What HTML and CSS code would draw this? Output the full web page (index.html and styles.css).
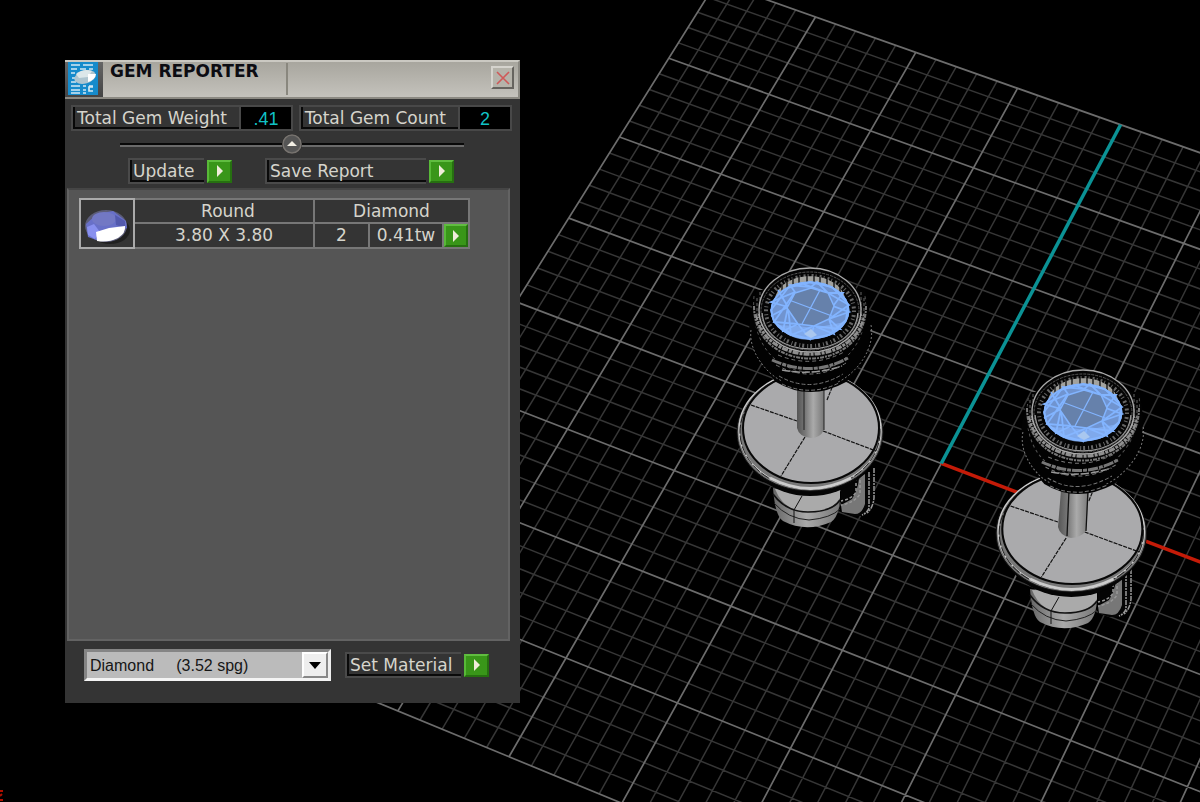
FILE: index.html
```html
<!DOCTYPE html>
<html lang="en">
<head>
<meta charset="utf-8">
<meta name="viewport" content="width=device-width, initial-scale=1">
<title>Gem Reporter</title>
<link rel="stylesheet" href="styles.css">
</head>
<body>
<main class="desktop">
  <svg class="scene" viewBox="0 0 1200 802" preserveAspectRatio="xMinYMin slice" aria-label="Perspective viewport">
    <defs>
      <linearGradient id="post-fill"><stop offset="0" stop-color="#555"/><stop offset=".3" stop-color="#777"/><stop offset=".6" stop-color="#aaa"/><stop offset="1" stop-color="#777"/></linearGradient>
      <linearGradient id="nut-fill"><stop offset="0" stop-color="#666"/><stop offset=".5" stop-color="#aaa"/><stop offset="1" stop-color="#777"/></linearGradient>

      <g id="nut">
        <path d="M841 474H875V500Q873 513 864 516H852L841 512Z" fill="#050505"/>
        <path d="M841 505L852 499Q858 490 859 478L865 474V504Q862 514 855 514L842 512Z" fill="#777"/>
        <path d="M856 478V492Q852 499 841 501M860 480V494Q854 503 841 505" fill="none" stroke="#999" stroke-width="1.5" stroke-dasharray="3 2"/>
        <path d="M869 472V508Q867 513 862 515M874 468V498Q873 508 867 513" fill="none" stroke="#999" stroke-width="1.5" stroke-dasharray="5 1 2 1"/>
        <path d="M773 488Q775 516 783 521Q806 533 831 522Q840 516 840 495Z" fill="url(#nut-fill)"/>
        <path d="M775 489Q784 512 808 512Q832 512 840 498V490Z" fill="#aaa"/>
        <path d="M773 494Q786 512 808 512Q832 512 840 500" fill="none" stroke="#111" stroke-width="1.6"/>
        <path d="M774 503Q788 519 809 520Q831 518 840 509" fill="none" stroke="#222"/>
        <path d="M802 496L794 510V523" fill="none" stroke="#111"/>
      </g>

      <g id="plate">
        <ellipse cx="810" cy="436" rx="70" ry="60" fill="#050505"/>
        <ellipse cx="810" cy="432" rx="73" ry="59" fill="#777" stroke="#111" stroke-width="1"/>
        <ellipse cx="810" cy="430" rx="71" ry="58" fill="none" stroke="#ccc" stroke-width="1.3"/>
        <ellipse cx="810" cy="432" rx="70" ry="57" fill="none" stroke="#222" stroke-width="1" stroke-dasharray="9 2"/>
        <path d="M770 478Q810 499 851 478" fill="none" stroke="#ccc" stroke-width="3"/>
        <ellipse cx="811" cy="428" rx="68" ry="55" fill="#aaaaac" stroke="#080808" stroke-width="2"/>
        <path d="M751 405L797 421M823 431L876 451M805 437L781 476M827 400L835 380" stroke="#111" stroke-width="1.2" stroke-dasharray="4 1"/>
      </g>

      <g id="collet">
        <path d="M757 290Q744 325 753 348Q768 374 776 382Q810 402 846 382Q858 372 869 345Q873 318 865 290Z" fill="#020202"/>
        <g fill="none" stroke="#777">
          <path d="M751 330C748 352 768 375 782 381" stroke-dasharray="2 2"/>
          <path d="M871 325C876 352 852 376 838 382" stroke-dasharray="2 2"/>
          <path d="M754 296C750 350 782 372 810 372S871 346 865 296" stroke="#555" stroke-dasharray="3 3"/>
          <path d="M772 360Q812 378 848 358" stroke="#777" stroke-width="3" stroke-dasharray="10 1 4 1"/>
          <path d="M782 370Q812 376 842 366" stroke="#999" stroke-width="1.500" stroke-dasharray="8 2"/>
          <path d="M778 355Q812 369 844 352M776 365Q812 384 846 363" stroke-dasharray="4 3"/>
          <path d="M779 376Q810 394 843 374M782 384Q810 397 839 383" stroke-dasharray="4 2"/>
        </g>
      </g>

      <g id="bezel">
        <ellipse cx="810" cy="314" rx="57" ry="44" fill="#060606"/>
        <path d="M754 306C754 376 866 376 866 306" fill="none" stroke="#777" stroke-width="2" stroke-dasharray="4 1 2 1"/>
        <path d="M757 314C764 367 857 367 863 314" fill="none" stroke="#8f8f8f" stroke-width="4" stroke-dasharray="6 1 3 1"/>
        <path d="M757 310C761 366 860 366 863 310" fill="none" stroke="#111" stroke-width="1" stroke-dasharray="3 1"/>
        <path d="M757 298V316M760 292V322M864 298V316M861 292V322" stroke="#666" stroke-dasharray="3 2"/>
        <ellipse cx="810" cy="310" rx="51" ry="42" fill="#050505" stroke="#aaa" stroke-width="1.4"/>
        <path d="M762 313C766 361 854 361 858 313" fill="none" stroke="#999" stroke-width="1.500"/>
        <ellipse cx="810" cy="311" rx="49" ry="39" fill="none" stroke="#555" stroke-dasharray="3 1"/>
        <ellipse cx="810" cy="311" rx="44" ry="35" fill="none" stroke="#666" stroke-width="4" stroke-dasharray="1 3 2 2"/>
        <path d="M775 298C782 269 838 269 845 298Z" fill="#a2a29e"/>
        <path d="M782 284V298M787 281V298M793 278V298M799 277V298M807 276V298M814 276V298M820 277V298M827 279V298M834 282V298M840 287V298" stroke="#222" stroke-width="1.5"/>
        <ellipse cx="810" cy="310.500" rx="39.500" ry="29" fill="#7094d0"/>
        <g fill="none" stroke="#82b4ff" stroke-width="1.8">
          <ellipse cx="810" cy="310.500" rx="38.500" ry="28"/>
          <path d="M771 310L788 288L810 282L832 287L848 304L846 320L829 335L810 339L791 334L774 322Z"/>
          <path d="M788 307L771 302L795 292L790 285L811 287L817 282L828 293L843 293L833 306L849 312L829 319L840 329L814 326L810 339L798 324L783 331L788 307M778 290L798 324L774 322L795 292M801 283L828 293L849 305L829 319L834 334L814 326L791 335L788 307L771 316"/>
        </g>
        <path d="M777 325Q790 341 810 339.500T845 322L829 325L814 328L797 326Z" fill="#88b8ff" opacity=".6"/>
        <path d="M795 293L811 288L828 293L834 306L829 319L814 326L798 324L787 308Z" fill="#6681ab" stroke="#82b4ff" stroke-width="1.500"/>
        <path d="M789 300L832 316M820 290L802 324" stroke="#82b4ff" stroke-width="1.300"/>
        <path d="M804 334L811 329L817 335L811 338Z" fill="#a9c7ef"/>
      </g>
    </defs>

    <rect width="1200" height="802" fill="#000"/>
    <path id="minor" class="grid-minor"/>
    <path id="major" class="grid-major"/>
    <path id="x-axis" class="axis axis-x"/>
    <path id="y-axis" class="axis axis-y"/>

    <g>
      <use href="#nut"/>
      <use href="#plate"/>
      <path d="M797 388H824V430Q820 438 811 438Q799 437 797 428Z" fill="url(#post-fill)"/>
      <path d="M804 390V430M824 388V430" stroke="#222"/>
      <use href="#collet"/>
      <use href="#bezel"/>
    </g>
    <g>
      <use href="#nut" x="257" y="101"/>
      <g transform="translate(237 101) scale(1.03 1)"><use href="#plate"/></g>
      <path d="M1061 490H1089L1086 531Q1080 538 1071 538Q1060 536 1058 527Z" fill="url(#post-fill)"/>
      <path d="M1069 490L1067 536M1088 490L1086 531" stroke="#111" stroke-width="1.300"/>
      <g transform="translate(295 102) skewX(-4)"><use href="#collet"/></g>
      <use href="#bezel" x="273" y="102"/>
    </g>
    <path d="M0 791H3M0 796L2 794M0 800H3" stroke="#b01000" stroke-width="2"/>
  </svg>

  <section class="panel" aria-labelledby="panel-title">
    <header class="titlebar">
      <div class="logo">
        <svg width="30" height="33" viewBox="0 0 30 33" aria-hidden="true">
          <rect width="30" height="33" fill="#168bcb"/>
          <path d="M3 3H12M15 3H25M3 7H9M12 7H18M21 7H25M3 11H7M4 16H7M3 20H8M3 24H12M15 24H18M21 24H25M3 28H12M15 28H18M3 31H12M15 31H18M25 25H21V29H25" fill="none" stroke="#d3e9f3" stroke-width="1.700"/>
          <ellipse cx="17" cy="15" rx="11" ry="6.500" fill="#aec5cf" transform="rotate(-16 17 15)"/>
          <path d="M8 12Q15 6 24 9L20 15L11 16Z" fill="#dce7e9"/>
          <path d="M20 12L28 12Q27 18 20 20Z" fill="#fff"/>
        </svg>
      </div>
      <h1 class="title" id="panel-title">GEM REPORTER</h1>
      <button class="close" type="button" aria-label="Close">
        <svg width="14" height="14" viewBox="0 0 14 14" aria-hidden="true"><path d="M1 1L13 13M13 1L1 13" stroke="#cf5959" stroke-width="1.600"/></svg>
      </button>
    </header>

    <div class="totals">
      <div class="total"><label class="total-label" for="weight">Total Gem Weight</label><output class="total-value" id="weight">.41</output></div>
      <div class="total"><label class="total-label" for="count">Total Gem Count</label><output class="total-value" id="count">2</output></div>
    </div>

    <div class="divider">
      <button class="collapse" type="button" aria-label="Collapse">
        <svg width="20" height="20" viewBox="0 0 20 20" aria-hidden="true"><circle cx="10" cy="10" r="9" fill="#555" stroke="#77736f" stroke-width="1.500"/><path d="M5 12L10 7L15 12Z" fill="#f1eee4"/></svg>
      </button>
    </div>

    <div class="actions">
      <div class="action"><span class="action-label" id="update-label">Update</span><button class="go" type="button" aria-labelledby="update-label"><svg width="8" height="12" viewBox="0 0 8 12" aria-hidden="true"><path d="M1 0L7 6L1 12Z"/></svg></button></div>
      <div class="action"><span class="action-label save" id="save-label">Save Report</span><button class="go" type="button" aria-labelledby="save-label"><svg width="8" height="12" viewBox="0 0 8 12" aria-hidden="true"><path d="M1 0L7 6L1 12Z"/></svg></button></div>
    </div>

    <div class="list">
      <table class="gems">
        <tbody>
          <tr>
            <td class="thumb" rowspan="2">
              <svg width="51" height="46" viewBox="0 0 51 46" role="img" aria-label="Round gem">
                <ellipse cx="29" cy="29" rx="20" ry="14" fill="#202020"/>
                <ellipse cx="25" cy="25" rx="21" ry="16" fill="#5c5d79"/>
                <path d="M5 23L16 13L32 10L45 20L46 27L32 33L18 40L7 36Z" fill="#6870c8"/>
                <ellipse cx="23" cy="18" rx="12" ry="7" fill="#7278c4"/>
                <path d="M6 26L13 23L19 31L14 38L7 34Z" fill="#8890ef"/>
                <path d="M34 14L44 20L44 27L35 24Z" fill="#5259ad"/>
                <path d="M15 31L28 27L44 25Q45 32 37 37Q27 42 16 40Z" fill="#fff"/>
              </svg>
            </td>
            <td class="cut">Round</td>
            <td colspan="3">Diamond</td>
          </tr>
          <tr>
            <td class="size">3.80 X 3.80</td>
            <td class="qty">2</td>
            <td class="weight">0.41tw</td>
            <td class="run"><button class="go" type="button" aria-label="Select round diamonds"><svg width="8" height="12" viewBox="0 0 8 12" aria-hidden="true"><path d="M1 0L7 6L1 12Z"/></svg></button></td>
          </tr>
        </tbody>
      </table>
    </div>

    <footer class="material">
      <div class="select-box">
        <select class="select" aria-label="Material"><option>Diamond&nbsp;&nbsp;&nbsp;&nbsp;&nbsp;(3.52 spg)</option></select>
        <span class="select-arrow"><svg width="12" height="7" viewBox="0 0 12 7" aria-hidden="true"><path d="M0 0H12L6 7Z"/></svg></span>
      </div>
      <div class="action"><span class="action-label set" id="set-label">Set Material</span><button class="go" type="button" aria-labelledby="set-label"><svg width="8" height="12" viewBox="0 0 8 12" aria-hidden="true"><path d="M1 0L7 6L1 12Z"/></svg></button></div>
    </footer>
  </section>
</main>
<script src="grid.js"></script>
</body>
</html>
```
FILE: grid.js
```js
// Construction plane: four known plane positions and where the camera puts them.
const anchors = [
  [-4, 3, 668.8, 58.3],
  [0, 4, 1120.6, 124.7],
  [-2, -4, 509, 756.7],
  [3, -2, 1187.5, 786.7]
];

// Solve the plane-to-screen projection with Gauss-Jordan elimination.
function solve(rows) {
  const n = rows.length;
  for (let c = 0; c < n; c++) {
    let p = c;
    for (let r = c + 1; r < n; r++) if (Math.abs(rows[r][c]) > Math.abs(rows[p][c])) p = r;
    [rows[c], rows[p]] = [rows[p], rows[c]];
    const d = rows[c][c];
    rows[c] = rows[c].map(v => v / d);
    for (let r = 0; r < n; r++) {
      if (r === c) continue;
      const f = rows[r][c];
      rows[r] = rows[r].map((v, k) => v - f * rows[c][k]);
    }
  }
  return rows.map(r => r[n]);
}

const rows = [];
for (const [i, j, x, y] of anchors) {
  rows.push([i, j, 1, 0, 0, 0, -i * x, -j * x, x]);
  rows.push([0, 0, 0, i, j, 1, -i * y, -j * y, y]);
}
const m = solve(rows);

function project(i, j) {
  const w = m[6] * i + m[7] * j + 1;
  return ((m[0] * i + m[1] * j + m[2]) / w).toFixed(1) + ' ' + ((m[3] * i + m[4] * j + m[5]) / w).toFixed(1);
}
const line = (a, b, c, d) => 'M' + project(a, b) + 'L' + project(c, d);

let minor = '';
let major = '';
for (let k = -20; k <= 20; k++) {
  const t = k / 5;
  const d = line(t, -4, t, 4) + line(-4, t, 4, t);
  if (k % 5) minor += d; else major += d;
}
document.getElementById('minor').setAttribute('d', minor);
document.getElementById('major').setAttribute('d', major);
document.getElementById('x-axis').setAttribute('d', line(0, 0, 4, 0));
document.getElementById('y-axis').setAttribute('d', line(0, 0, 0, 4));
```
FILE: styles.css
```css
* { box-sizing: border-box; }

body {
  margin: 0;
  background: #000;
  font-family: "DejaVu Sans", Verdana, sans-serif;
  font-size: 17px;
  line-height: 22px;
  color: #d6d4cc;
}

.desktop {
  position: relative;
  min-height: 100vh;
  overflow: hidden;
}

.scene {
  position: absolute;
  inset: 0;
  width: 100%;
  height: 100%;
}

.grid-minor { fill: none; stroke: #363636; stroke-width: 1.5; }
.grid-major { fill: none; stroke: #6c6c6c; stroke-width: 1.7; }
.axis { fill: none; stroke-width: 3.5; }
.axis-x { stroke: #c41b08; }
.axis-y { stroke: #0b9295; }

.panel {
  position: absolute;
  left: 65px;
  top: 60px;
  width: 455px;
  display: flex;
  flex-direction: column;
  padding-bottom: 22px;
  background: #343434;
}

button {
  display: flex;
  align-items: center;
  justify-content: center;
  padding: 0;
  margin: 0;
}

.titlebar {
  display: flex;
  align-items: flex-start;
  height: 39px;
  background: linear-gradient(#a8a69e, #c4c2bc);
  border: 2px solid #8b8982;
  border-top-color: #cbc9c2;
  border-left: 0;
}

.logo {
  display: flex;
  width: 38px;
  height: 35px;
  padding: 0 0 0 3px;
  background: linear-gradient(#666, #444);
}

.title {
  width: 185px;
  height: 32px;
  margin: 1px auto 0 0;
  padding-left: 7px;
  border-right: 2px solid #89877e;
  color: #0c0c12;
  font-size: 17px;
  line-height: 16px;
  font-weight: bold;
}

.close {
  width: 23px;
  height: 23px;
  margin: 4px 4px 0 0;
  background: #b5b3aa;
  border: 2px solid;
  border-color: #d5d3cd #66645f #66645f #d5d3cd;
}

.totals {
  display: flex;
  justify-content: space-between;
  padding: 6px 8px 0 6px;
}

.total {
  display: flex;
  height: 26px;
  border: 2px solid #484848;
}

.total-label {
  padding: 0 12px 0 2px;
  border: solid #080808;
  border-width: 0 0 2px 2px;
}

.total-value {
  width: 52px;
  border-left: 2px solid #484848;
  background: #000;
  color: #10c2c6;
  font: 18px/24px "Liberation Sans Narrow", "Liberation Sans", Arial, sans-serif;
  text-align: center;
}

.divider {
  display: flex;
  justify-content: center;
  height: 27px;
  margin: 0 56px 0 55px;
  padding-top: 3px;
  background: linear-gradient(#080808 0 2px, #6a6a6a 2px 4px) 0 12px / 100% 4px no-repeat;
}

.collapse {
  width: 20px;
  height: 20px;
  border: 0;
  border-radius: 50%;
  background: #222;
}

.actions {
  display: flex;
  gap: 33px;
  padding-left: 63px;
}

.action {
  display: flex;
  align-items: center;
  gap: 3px;
}

.action-label {
  width: 76px;
  height: 26px;
  padding-left: 3px;
  border: solid #4a4a4a;
  border-width: 2px 0 2px 2px;
  box-shadow: inset 2px -2px #0a0a0a;
  white-space: nowrap;
}

.action-label.save { width: 161px; }
.action-label.set { width: 116px; }

.go {
  width: 25px;
  height: 23px;
  background: #399619;
  border: 2px solid;
  border-color: #60bd40 #267010 #267010 #58b938;
}

.go svg { fill: #f0edda; }

.list {
  min-height: 453px;
  margin: 4px 10px 0 2px;
  padding: 8px 10px;
  background: #555;
  border: 2px solid #636363;
  border-top-color: #454545;
}

.gems {
  border-collapse: collapse;
  background: #343434;
  text-align: center;
}

.gems td {
  height: 24px;
  padding: 0;
  border: 2px solid #777;
  line-height: 21px;
}

.gems .thumb { width: 54px; border-color: #aaa; line-height: 0; }
.thumb svg { display: block; }
.gems .cut { padding-left: 8px; }
.gems .size { width: 180px; }
.gems .qty { width: 55px; }
.gems .weight { width: 74px; }
.gems .run { width: 26px; }
.run .go { width: 100%; }

.material {
  display: flex;
  align-items: center;
  gap: 14px;
  padding: 8px 0 0 19px;
}

.select-box {
  display: flex;
  width: 247px;
  height: 32px;
  background: #bbb;
  border: 3px solid;
  border-color: #858585 #eee #f4f4f4 #858585;
}

.select {
  flex: 1;
  min-width: 0;
  padding: 0 3px;
  border: 0;
  appearance: none;
  background: transparent;
  color: #161616;
  font: 16px "Liberation Sans", Arial, sans-serif;
}

.select-arrow {
  display: flex;
  align-items: center;
  justify-content: center;
  width: 26px;
  background: #eee;
  border: 2px solid;
  border-color: #fff #888 #888 #fff;
  pointer-events: none;
}
```
